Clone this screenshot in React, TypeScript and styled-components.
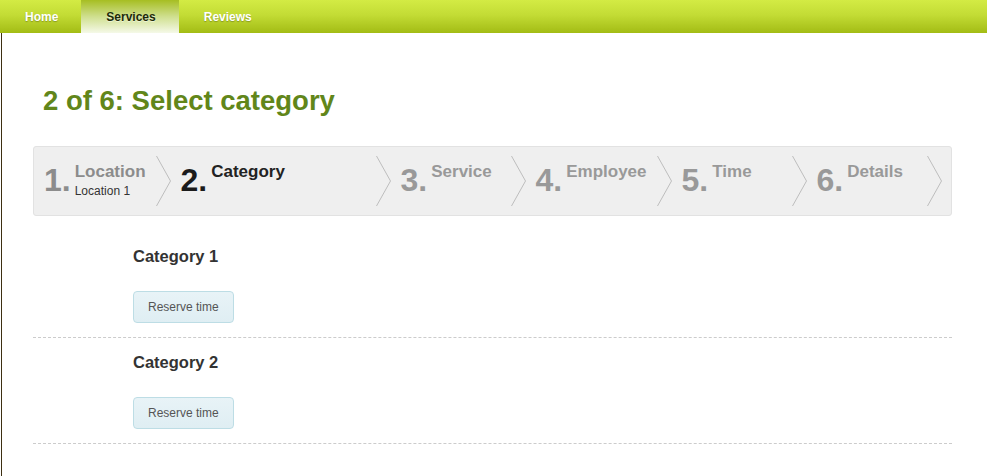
import styled, { createGlobalStyle } from 'styled-components';

const GlobalStyle = createGlobalStyle`
  html, body {
    margin: 0;
    padding: 0;
    background: #ffffff;
    font-family: 'Liberation Sans', Arial, sans-serif;
  }
`;

const NavBar = styled.nav`
  height: 33px;
  display: flex;
  background: linear-gradient(to bottom, #d3eb44 0%, #c3dc35 45%, #a3bc15 100%);
`;

const NavTab = styled.a<{ $active?: boolean }>`
  display: flex;
  align-items: center;
  padding: 0 23px 0 25px;
  font-size: 12px;
  font-weight: 700;
  text-decoration: none;
  color: ${(p) => (p.$active ? '#1d2a08' : '#ffffff')};
  text-shadow: ${(p) =>
    p.$active ? '0 1px 0 rgba(255,255,255,0.5)' : '0 1px 1px rgba(0,0,0,0.25)'};
  background: ${(p) =>
    p.$active
      ? 'linear-gradient(to bottom, #a6be22 0%, #cfdf8e 50%, #f5f9e8 100%)'
      : 'transparent'};
`;

const Main = styled.main`
  margin-left: 1px;
  border-left: 1px solid #3d2f12;
  min-height: calc(100vh - 33px);
  padding: 51px 0 0 31px;
  box-sizing: border-box;
`;

const Container = styled.div`
  width: 919px;
`;

const Title = styled.h2`
  margin: 0 0 29px 10px;
  font-size: 27.5px;
  line-height: 33px;
  font-weight: 700;
  color: #61861a;
`;

const Stepper = styled.div`
  display: flex;
  height: 70px;
  box-sizing: border-box;
  background: #efefef;
  border: 1px solid #e2e2e2;
  border-radius: 3px;
  margin-bottom: 16px;
`;

const Step = styled.div<{ $active?: boolean }>`
  display: flex;
  align-items: stretch;
  min-width: ${(p) => (p.$active ? 220 : 135)}px;
  padding-left: 10px;
  box-sizing: border-box;
`;

const StepContent = styled.div`
  display: flex;
  align-items: flex-start;
  gap: 4px;
  padding-top: 14px;
  margin-right: 10px;
`;

const StepNumber = styled.span<{ $state: 'done' | 'active' | 'todo' }>`
  margin-top: 3px;
  font-size: 32px;
  line-height: 32px;
  font-weight: 700;
  color: ${(p) => (p.$state === 'active' ? '#1b1b1b' : p.$state === 'done' ? '#8c8c8c' : '#999999')};
`;

const StepText = styled.div`
  display: flex;
  flex-direction: column;
`;

const StepLabel = styled.span<{ $state: 'done' | 'active' | 'todo' }>`
  font-size: 17px;
  line-height: 22px;
  font-weight: 700;
  color: ${(p) => (p.$state === 'active' ? '#222222' : p.$state === 'done' ? '#8c8c8c' : '#999999')};
`;

const StepSub = styled.span`
  margin-top: 1px;
  font-size: 12px;
  line-height: 14px;
  color: #333333;
`;

const Chevron = styled.svg`
  margin-left: auto;
  align-self: center;
  flex-shrink: 0;
`;

const Row = styled.div`
  padding: 14px 0 14px 100px;
  border-bottom: 1px dashed #cccccc;
`;

const RowTitle = styled.h3`
  margin: 0 0 25px 0;
  font-size: 16.5px;
  line-height: 20px;
  font-weight: 700;
  color: #333333;
`;

const ReserveButton = styled.button`
  height: 32px;
  padding: 0 14px;
  box-sizing: border-box;
  font-family: 'Liberation Sans', Arial, sans-serif;
  font-size: 12px;
  color: #555555;
  background: linear-gradient(to bottom, #e8f3f7 0%, #dfeef3 100%);
  border: 1px solid #bddde5;
  border-radius: 4px;
  cursor: pointer;
`;

const steps = [
  { n: 1, label: 'Location', sub: 'Location 1' },
  { n: 2, label: 'Category' },
  { n: 3, label: 'Service' },
  { n: 4, label: 'Employee' },
  { n: 5, label: 'Time' },
  { n: 6, label: 'Details' },
];

const current = 2;

const categories = ['Category 1', 'Category 2'];

export default function App() {
  return (
    <>
      <GlobalStyle />
      <NavBar>
        <NavTab href="#">Home</NavTab>
        <NavTab href="#" $active>
          Services
        </NavTab>
        <NavTab href="#">Reviews</NavTab>
      </NavBar>
      <Main>
        <Container>
          <Title>2 of 6: Select category</Title>
          <Stepper>
            {steps.map((s) => {
              const state = s.n < current ? 'done' : s.n === current ? 'active' : 'todo';
              return (
                <Step key={s.n} $active={state === 'active'}>
                  <StepContent>
                    <StepNumber $state={state}>{s.n}.</StepNumber>
                    <StepText>
                      <StepLabel $state={state}>{s.label}</StepLabel>
                      {s.sub ? <StepSub>{s.sub}</StepSub> : null}
                    </StepText>
                  </StepContent>
                  <Chevron width="15" height="52" viewBox="0 0 15 52">
                    <polyline
                      points="0.5,1 14.5,26 0.5,51"
                      fill="none"
                      stroke="#bdbdbd"
                      strokeWidth="1"
                    />
                  </Chevron>
                </Step>
              );
            })}
          </Stepper>
          {categories.map((c) => (
            <Row key={c}>
              <RowTitle>{c}</RowTitle>
              <ReserveButton>Reserve time</ReserveButton>
            </Row>
          ))}
        </Container>
      </Main>
    </>
  );
}
